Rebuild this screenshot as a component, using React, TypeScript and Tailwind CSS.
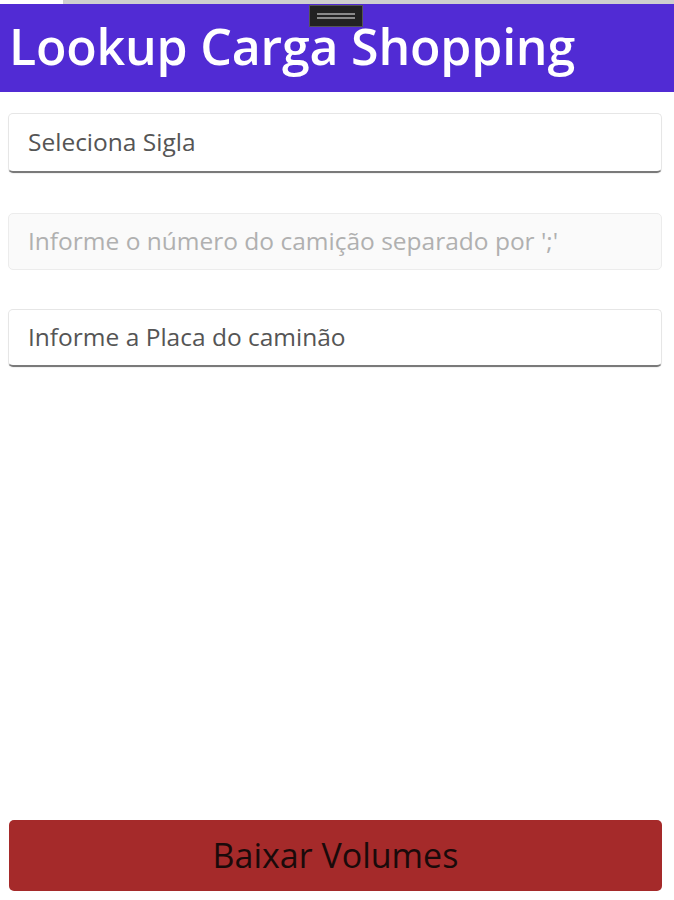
import React from 'react'

const font = { fontFamily: '"Open Sans", "Noto Sans", sans-serif' }

type FieldProps = {
  placeholder: string
  disabled?: boolean
  height: string
}

const Field = ({ placeholder, disabled, height }: FieldProps) => {
  return (
    <div
      className={
        disabled
          ? `${height} rounded-[5px] border border-[#ececec] bg-[#fafafa] flex items-center px-[19px]`
          : `${height} rounded-[5px] border border-[#e6e6e6] border-b-2 border-b-[#7a7a7a] bg-white flex items-center px-[19px] shadow-[0_1px_1px_rgba(0,0,0,0.06)]`
      }
    >
      <span className={disabled ? 'text-[24.5px] text-[#b0b0b0]' : 'text-[24.5px] text-[#555555]'}>
        {placeholder}
      </span>
    </div>
  )
}

const App = () => {
  return (
    <div className="w-[674px] h-[900px] bg-white flex flex-col" style={font}>
      {/* top strip */}
      <div className="h-[4px] flex">
        <div className="w-[63px] bg-white"></div>
        <div className="flex-1 bg-[#cfcfcf]"></div>
      </div>

      {/* header */}
      <div className="relative h-[88px] bg-[#512bd4] flex items-center pl-[9px]">
        <h1 className="text-white text-[50px] font-semibold leading-none tracking-[-0.2px] -mt-[4px]">
          Lookup Carga Shopping
        </h1>
        <div className="absolute left-[309px] top-[1px] w-[54px] h-[22px] bg-[#222222] border border-[#555555] flex flex-col items-center justify-center gap-[2px]">
          <div className="w-[38px] h-[2px] bg-[#8a8a8a]"></div>
          <div className="w-[38px] h-[2px] bg-[#8a8a8a]"></div>
        </div>
      </div>

      {/* form */}
      <div className="flex-1 flex flex-col pl-[8px] pr-[12px] pt-[21px]">
        <Field height="h-[60px]" placeholder="Seleciona Sigla" />
        <div className="mt-[40px]">
          <Field height="h-[57px]" placeholder="Informe o número do camição separado por ';'" disabled />
        </div>
        <div className="mt-[39px]">
          <Field height="h-[58px]" placeholder="Informe a Placa do caminão" />
        </div>

        <div className="flex-1"></div>

        <button className="ml-[1px] mb-[9px] h-[71px] rounded-[5px] bg-[#a52a2a] text-[#1a0a0a] text-[34px]">
          Baixar Volumes
        </button>
      </div>
    </div>
  )
}

export default App
